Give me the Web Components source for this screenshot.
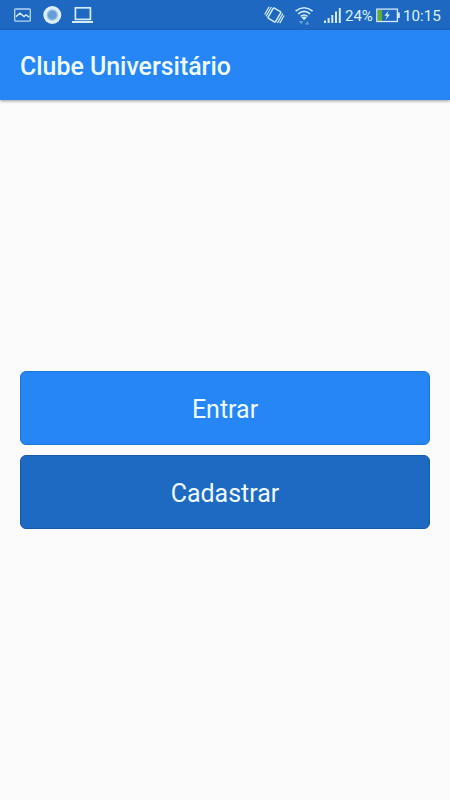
<!DOCTYPE html>
<html lang="pt-BR">
<head>
<meta charset="utf-8">
<title>Clube Universitário</title>
<style>
  body {
    margin: 0;
    height: 100vh;
    font-family: Roboto, sans-serif;
    color: #edfbff;
  }
</style>
</head>
<body>
<club-app>
  <status-bar slot="status" battery="24%" time="10:15"></status-bar>
  <app-header slot="header">Clube Universitário</app-header>
  <club-button>Entrar</club-button>
  <club-button variant="dark">Cadastrar</club-button>
</club-app>

<script>
class StatusBar extends HTMLElement {
  constructor() {
    super();
    this.shadowDom = this.attachShadow({ mode: 'open' });
  }

  connectedCallback() {
    this.render();
  }

  render() {
    this.shadowDom.innerHTML = `
    <style>
        :host{
            display: flex;
            align-items: center;
            justify-content: space-between;
            box-sizing: border-box;
            height: 30px;
            padding: 0 10px 0 13px;
            background-color: #1e68c2;
            color: #dcf1fb;
        }
        .group{
            display: flex;
            align-items: center;
            height: 30px;
        }
        svg{
            display: block;
            flex: none;
            fill: none;
            stroke: #d3ecf7;
        }
        .solid{
            fill: #d3ecf7;
            stroke: none;
        }
        .percent, .time{
            line-height: 30px;
            white-space: nowrap;
            padding-top: 1px;
        }
        .percent{
            font-size: 15px;
            width: 27px;
            margin: 0 4px 0 3px;
        }
        .time{
            font-size: 15.2px;
            width: 37px;
            margin-left: 3px;
        }
    </style>
    <div class="group">
        <svg width="82" height="30" viewBox="13 0 82 30">
            <rect x="14.7" y="9" width="15.6" height="12.2" rx="1" stroke-width="1.3" stroke="#b4d6ef"/>
            <path d="M16 16.6l4-3.4 4 3.4 2-1.7 3.4 2.4" stroke-width="1.4"/>
            <circle cx="52.3" cy="15" r="9" fill="#dceff8" stroke="none"/>
            <circle cx="52.3" cy="15" r="5" fill="#669dd5" stroke="#96bde3" stroke-width="1.3"/>
            <rect x="75.4" y="7.8" width="15" height="11.6" stroke-width="1.7"/>
            <path class="solid" d="M72 21h21v2H72z"/>
        </svg>
    </div>
    <div class="group">
        <svg width="80" height="30" viewBox="262 0 80 30">
            <g transform="translate(274.4 15) rotate(30)">
                <rect x="-4.4" y="-5.9" width="8.8" height="11.8" rx="1" stroke-width="1.5"/>
                <path d="M-6.6-5.4V5.4M6.6-5.4V5.4M-8.7-4.4V4.4M8.7-4.4V4.4" stroke-width="1.2"/>
            </g>
            <path d="M295.6 11.1q8.5-6.8 17 0M298.1 13.8q6-4.8 12 0M300.6 16.3q3.5-2.7 7 0" stroke-width="1.6"/>
            <path class="solid" d="M301.4 17.3q2.7-1.6 5.4 0l-2.7 3z"/>
            <path d="M299 21h4.4l-2.2 3.5zM305 24.5h4.4l-2.2-3.5z" fill="#679fd5" stroke="none"/>
            <path class="solid" d="M324 20.5h2V23h-2zM327.6 18h2v5h-2zM331.3 15h2v8h-2zM335 11.5h2V23h-2zM338.8 8h2v15h-2z"/>
        </svg>
        <span class="percent">${this.getAttribute('battery')}</span>
        <svg width="24" height="30" viewBox="376 0 24 30">
            <path d="M377.5 10h4.6v11h-4.6z" fill="#62ab35" stroke="none"/>
            <rect x="376.8" y="9.1" width="20.6" height="12.4" stroke-width="1.3"/>
            <path class="solid" d="M398 12.5h1.8V18H398zM388.7 10.5l-4.3 5.2h2.6l-1.5 4.2 4.5-5.5h-2.7z"/>
        </svg>
        <span class="time">${this.getAttribute('time')}</span>
    </div>
    `;
  }
}

class AppHeader extends HTMLElement {
  constructor() {
    super();
    this.shadowDom = this.attachShadow({ mode: 'open' });
  }

  connectedCallback() {
    this.render();
  }

  render() {
    this.shadowDom.innerHTML = `
    <style>
        :host{
            display: flex;
            align-items: center;
            box-sizing: border-box;
            height: 70px;
            padding: 2px 20px 0;
            background-color: #2686f6;
            box-shadow: 0 1px 3px rgba(0,0,0,.4);
        }
        h1{
            margin: 0;
            font-size: 24.9px;
            font-weight: 500;
            white-space: nowrap;
        }
    </style>
    <h1><slot></slot></h1>
    `;
  }
}

class ClubButton extends HTMLElement {
  constructor() {
    super();
    this.shadowDom = this.attachShadow({ mode: 'open' });
  }

  connectedCallback() {
    this.render();
  }

  render() {
    this.shadowDom.innerHTML = `
    <style>
        :host{
            display: block;
            --fill: #2686f6;
            --edge: #1f76d4;
        }
        :host([variant="dark"]){
            --fill: #1e69c1;
            --edge: #165aa8;
        }
        button{
            display: block;
            box-sizing: border-box;
            width: 100%;
            height: 74px;
            margin: 0;
            padding: 2px 0 0;
            border: 1px solid var(--edge);
            border-radius: 6px;
            background-color: var(--fill);
            color: inherit;
            font: 400 25px Roboto, sans-serif;
        }
    </style>
    <button type="button"><slot></slot></button>
    `;
  }
}

class ClubApp extends HTMLElement {
  constructor() {
    super();
    this.shadowDom = this.attachShadow({ mode: 'open' });
  }

  connectedCallback() {
    this.render();
  }

  render() {
    this.shadowDom.innerHTML = `
    <style>
        :host{
            display: flex;
            flex-direction: column;
            height: 100%;
            overflow: hidden;
            background-color: #fbfbfb;
        }
        main{
            flex: 1;
            display: flex;
            flex-direction: column;
            justify-content: center;
            gap: 10px;
            padding: 0 20px;
        }
    </style>
    <slot name="status"></slot>
    <slot name="header"></slot>
    <main><slot></slot></main>
    `;
  }
}

customElements.define('status-bar', StatusBar);
customElements.define('app-header', AppHeader);
customElements.define('club-button', ClubButton);
customElements.define('club-app', ClubApp);
</script>
</body>
</html>
